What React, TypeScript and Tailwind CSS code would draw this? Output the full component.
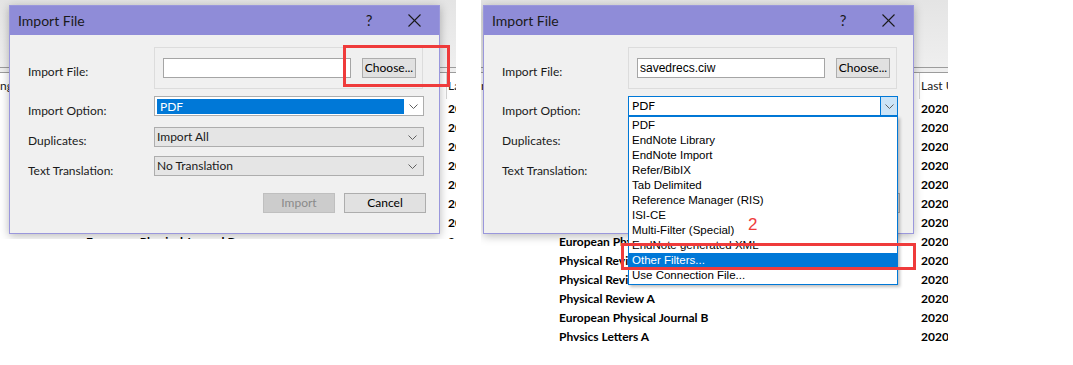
import React from 'react';

const LEFT_ROWS = [
  'Physical Review B',
  'Physical Review Letters',
  'Physical Review E',
  'Journal of Applied Physics',
  'Applied Physics Letters',
  'New Journal of Physics',
  'Physical Review B',
  'European Physical Journal B',
];

const RIGHT_ROWS = [
  'Physical Review B',
  'Physical Review Letters',
  'Physical Review E',
  'Journal of Applied Physics',
  'Applied Physics Letters',
  'New Journal of Physics',
  'Physical Review B',
  'European Physical Journal B',
  'Physical Review B',
  'Physical Review E',
  'Physical Review A',
  'European Physical Journal B',
  'Physics Letters A',
];

const FILTERS = [
  'PDF',
  'EndNote Library',
  'EndNote Import',
  'Refer/BibIX',
  'Tab Delimited',
  'Reference Manager (RIS)',
  'ISI-CE',
  'Multi-Filter (Special)',
  'EndNote generated XML',
  'Other Filters...',
  'Use Connection File...',
];

function Chevron() {
  return (
    <svg width="9" height="5" viewBox="0 0 9 5" className="shrink-0">
      <polyline points="0.5,0.5 4.5,4.5 8.5,0.5" fill="none" stroke="#606060" strokeWidth="1" />
    </svg>
  );
}

function CloseIcon() {
  return (
    <svg width="13" height="13" viewBox="0 0 13 13">
      <line x1="0.5" y1="0.5" x2="12.5" y2="12.5" stroke="#1a1a1a" strokeWidth="1.1" />
      <line x1="12.5" y1="0.5" x2="0.5" y2="12.5" stroke="#1a1a1a" strokeWidth="1.1" />
    </svg>
  );
}

function AppBackground({ rows, pad }: { rows: string[]; pad: string }) {
  return (
    <div className="flex flex-col">
      <div className="h-[67px] bg-gradient-to-b from-[#e4e4e4] to-[#efefef]" />
      <div className="h-[6px] border-y border-[#9c9c9c] bg-[#eeeeee]" />
      <div className="h-[26px] flex items-center text-[12px] text-[#1a1a1a] whitespace-nowrap">
        <span className={`shrink-0 ${pad === 'left' ? 'w-[446px]' : 'w-[438px]'}`}>ng</span>
        <span className="shrink-0 h-[26px] w-px bg-[#d4d4d4] mr-[1px]" />
        <span className="shrink-0">Last Updated</span>
      </div>
      {rows.map((r, i) => (
        <div key={i} className="h-[19px] flex items-center text-[12px] font-bold text-black whitespace-nowrap">
          <span className={`shrink-0 ${pad === 'left' ? 'w-[448px] pl-[86px]' : 'w-[440px] pl-[78px]'}`}>{r}</span>
          <span className="shrink-0">2020</span>
        </div>
      ))}
    </div>
  );
}

function Dialog({ open, left }: { open: boolean; left: string }) {
  return (
    <div className={`absolute top-[5px] ${left} w-[431px] h-[229px] border border-[#9a97dc] bg-[#f0f0f0] shadow-[0_2px_9px_rgba(0,0,0,0.28)]`}>
      <div className="h-[29px] bg-[#8f8cd8] flex items-center pl-2 text-[14px] text-[#1a1a1a]">
        <span>Import File</span>
        <span className="ml-auto text-[15px] w-[10px] text-center">?</span>
        <span className="ml-[34px] mr-[18px] flex items-center"><CloseIcon /></span>
      </div>
      <div className="pl-[18px] pt-3 text-[12px] leading-[16px] text-[#1a1a1a]">
        <div className="flex items-center">
          <span className="w-[126px] relative top-[4px]">Import File:</span>
          <div className="w-[269px] h-[42px] border border-[#dcdcdc] flex items-center pl-[8px] gap-[11px]">
            <div className="w-[188px] h-[20px] border border-[#a5a5a5] bg-white pl-[2px] font-['Liberation_Sans',sans-serif] text-[12px] leading-[18px] text-black">
              {open ? 'savedrecs.ciw' : ''}
            </div>
            <div className="w-[54px] h-[20px] border border-[#adadad] bg-[#e1e1e1] flex items-center justify-center text-black">
              Choose...
            </div>
          </div>
        </div>
        <div className="flex items-center mt-[7px]">
          <span className="w-[126px] relative top-[5px]">Import Option:</span>
          {open ? (
            <div className="relative w-[270px] h-[20px] border border-[#0078d7] bg-white flex items-center z-10">
              <span className="pl-[3px] text-black">PDF</span>
              <div className="ml-auto h-full w-[17px] bg-[#cce4f7] border-l border-[#0078d7] flex items-center justify-center">
                <Chevron />
              </div>
              <div className="absolute left-[-1px] top-[19px] w-[270px] border border-[#0078d7] bg-white py-[1px] shadow-[2px_2px_3px_rgba(0,0,0,0.25)] font-['Liberation_Sans',sans-serif] text-[11.5px] text-black">
                {FILTERS.map(f => (
                  <div
                    key={f}
                    className={`h-[15px] leading-[15px] pl-[3px] whitespace-nowrap ${f === 'Other Filters...' ? 'bg-[#0078d7] text-white' : ''}`}
                  >
                    {f}
                  </div>
                ))}
              </div>
            </div>
          ) : (
            <div className="w-[270px] h-[20px] border border-[#adadad] bg-white flex items-center pl-[2px] pr-[5px]">
              <div className="w-[247px] h-[15px] bg-[#0078d7] text-white pl-[3px] leading-[15px]">PDF</div>
              <span className="ml-auto"><Chevron /></span>
            </div>
          )}
        </div>
        <div className="flex items-center mt-[11px]">
          <span className="w-[126px] relative top-[4px]">Duplicates:</span>
          <div className="w-[270px] h-[20px] border border-[#adadad] bg-[#e5e5e5] flex items-center pl-[2px] pr-[6px]">
            <span>Import All</span>
            <span className="ml-auto"><Chevron /></span>
          </div>
        </div>
        <div className="flex items-center mt-[9px]">
          <span className="w-[126px] relative top-[5px]">Text Translation:</span>
          <div className="w-[270px] h-[20px] border border-[#adadad] bg-[#e5e5e5] flex items-center pl-[2px] pr-[6px]">
            <span>No Translation</span>
            <span className="ml-auto"><Chevron /></span>
          </div>
        </div>
        <div className="flex mt-[17px] pl-[235px] gap-[9px]">
          <div className="w-[72px] h-[20px] border border-[#bfbfbf] bg-[#cccccc] text-[#8a8a8a] flex items-center justify-center">
            Import
          </div>
          <div className="w-[82px] h-[20px] border border-[#adadad] bg-[#e1e1e1] text-black flex items-center justify-center">
            Cancel
          </div>
        </div>
      </div>
    </div>
  );
}

export default function App() {
  return (
    <div className="w-[1073px] h-[365px] bg-white flex items-start font-[Lato,sans-serif]">
      <div className="relative w-[456px] h-[239px] overflow-hidden">
        <AppBackground rows={LEFT_ROWS} pad="left" />
        <Dialog open={false} left="left-[9px]" />
        <div className="absolute left-[343px] top-[45px] w-[107px] h-[42px] border-[3px] border-[#ef3b3b]" />
      </div>
      <div className="relative ml-[25px] w-[467px] h-[341px] overflow-hidden">
        <AppBackground rows={RIGHT_ROWS} pad="right" />
        <Dialog open={true} left="left-[2px]" />
        <div className="absolute left-[140px] top-[243px] w-[295px] h-[27px] border-[3px] border-[#ef3b3b] z-20" />
        <span className="absolute left-[267px] top-[212px] text-[17px] text-[#ef3b3b] z-20 font-['Liberation_Sans',sans-serif]">2</span>
      </div>
    </div>
  );
}
